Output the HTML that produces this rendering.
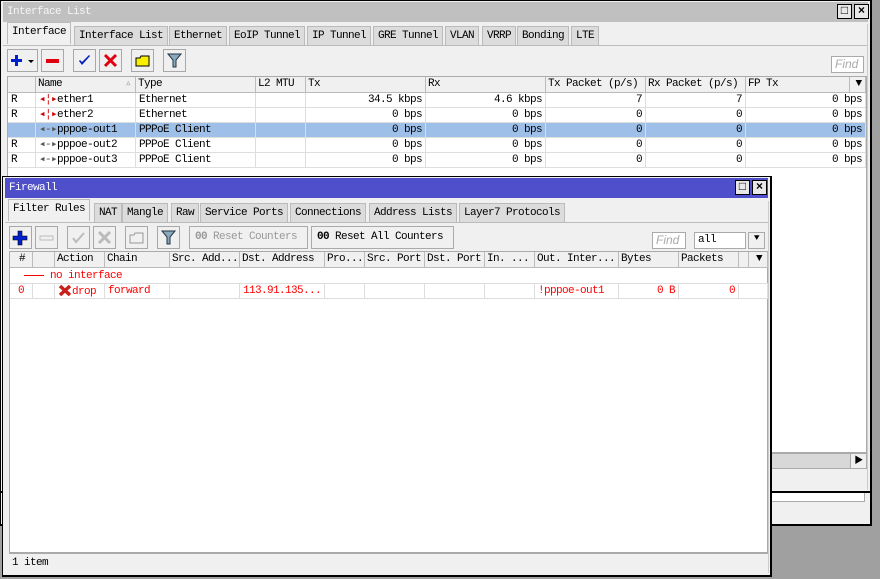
<!DOCTYPE html>
<html><head><meta charset="utf-8"><style>
*{margin:0;padding:0;box-sizing:border-box}
body{width:880px;height:579px;background:#a0a0a0;position:relative;overflow:hidden;font-family:"Liberation Mono","Noto Sans CJK SC",monospace;font-size:11px;letter-spacing:-0.6px;color:#000}
.a{position:absolute}
.win{position:absolute;background:#f0f0f0;border:1px solid #000;border-right-width:2px;border-bottom-width:2px}
.tb{position:absolute;left:2px;right:2px;height:20px;line-height:20px;padding-left:4px;font-size:11px}
.tab{position:absolute;height:20px;line-height:19px;padding:0 4px;background:#dcdcdc;border:1px solid #bbb;border-bottom:none;white-space:nowrap}
.tab.on{background:#f0f0f0;height:22px;top:-2px!important}
.btn{position:absolute;width:23px;height:23px;border:1px solid #a8a8a8;background:#f0f0f0}
.hd{position:absolute;height:16px;line-height:15px;border-right:1px solid #bbb;border-bottom:1px solid #bbb;background:#f0f0f0;padding-left:2px;white-space:nowrap;overflow:hidden}
.c{position:absolute;height:15px;line-height:14px;border-right:1px solid #ddd;border-bottom:1px solid #ddd;padding:0 3px;white-space:nowrap;overflow:hidden}
.r{text-align:right}
.sel{background:#9dbfe8}
.wb{position:absolute;width:15px;height:15px;border:1px solid #000;background:#e8e8e8;font-size:12px;line-height:12px;text-align:center;font-weight:bold;letter-spacing:0}
</style></head><body>

<div class="win" style="left:0;top:0;width:872px;height:526px;"></div>
<div class="a" style="left:10px;top:493px;width:855px;height:9px;background:#fff;border:1px solid #aaa;border-top:none"></div>

<div class="win" style="left:0;top:0;width:872px;height:493px;">
 <div class="tb" style="top:1px;background:#c0c0c0;color:#f4f4f4">Interface List</div>
 <div class="wb" style="left:836px;top:3px;font-weight:normal">□</div>
 <div class="wb" style="left:853px;top:3px">×</div>
 <div class="a" style="left:0;top:23px;width:868px;height:22px">
  <div class="tab on" style="left:6px;top:0">Interface</div>
  <div class="tab" style="left:73px;top:2px">Interface List</div>
  <div class="tab" style="left:168px;top:2px">Ethernet</div>
  <div class="tab" style="left:228px;top:2px">EoIP Tunnel</div>
  <div class="tab" style="left:306px;top:2px">IP Tunnel</div>
  <div class="tab" style="left:372px;top:2px">GRE Tunnel</div>
  <div class="tab" style="left:444px;top:2px">VLAN</div>
  <div class="tab" style="left:481px;top:2px">VRRP</div>
  <div class="tab" style="left:516px;top:2px">Bonding</div>
  <div class="tab" style="left:570px;top:2px">LTE</div>
 </div>
 <div class="a" style="left:2px;top:44px;width:865px;height:1px;background:#bbb"></div>
 <div class="btn" style="left:6px;top:48px;width:31px"><svg width="29" height="21"><path d="M7 5h3v4h4v3h-4v4h-3v-4h-4v-3h4z" fill="#0020d0"/><path d="M20 10h6l-3 3z" fill="#000"/></svg></div>
 <div class="btn" style="left:40px;top:48px"><svg width="21" height="21"><rect x="4" y="9" width="13" height="4" fill="#e00010"/></svg></div>
 <div class="btn" style="left:72px;top:48px"><svg width="21" height="21"><path d="M5 11l3 4 8-9-1-1-7 7-2-2z" fill="#0020c0"/></svg></div>
 <div class="btn" style="left:98px;top:48px"><svg width="21" height="21"><path d="M5 5l11 11M16 5L5 16" stroke="#e00010" stroke-width="3"/></svg></div>
 <div class="btn" style="left:130px;top:48px"><svg width="21" height="21"><path d="M4 8h4l1-2h8v10H4z" fill="#f8f000" stroke="#000"/></svg></div>
 <div class="btn" style="left:162px;top:48px"><svg width="21" height="21"><path d="M4 4h13l-5 6v7h-3v-7z" fill="#8ab" stroke="#234"/></svg></div>
 <div class="a" style="left:830px;top:55px;width:33px;height:17px;border:1px solid #aaa;background:#fff;color:#aaa;font-family:'Liberation Sans',sans-serif;font-style:italic;font-size:12px;letter-spacing:0;line-height:15px;padding-left:3px">Find</div>
 <div class="a" style="left:6px;top:75px;width:860px;height:377px;background:#fff;border:1px solid #aaa"></div>
 <div class="a" style="left:7px;top:76px">
  <div class="hd" style="left:0;width:28px"></div>
  <div class="hd" style="left:28px;width:100px">Name<span style="position:absolute;right:4px;color:#aaa">▵</span></div>
  <div class="hd" style="left:128px;width:120px">Type</div>
  <div class="hd" style="left:248px;width:50px">L2 MTU</div>
  <div class="hd" style="left:298px;width:120px">Tx</div>
  <div class="hd" style="left:418px;width:120px">Rx</div>
  <div class="hd" style="left:538px;width:100px">Tx Packet (p/s)</div>
  <div class="hd" style="left:638px;width:100px">Rx Packet (p/s)</div>
  <div class="hd" style="left:738px;width:104px">FP Tx</div>
  <div class="hd" style="left:842px;width:16px;text-align:center">▼</div>
 </div>
 <div class="a" style="left:7px;top:92px">
  <div class="c" style="left:0;top:0;width:28px">R</div><div class="c" style="left:28px;top:0;width:100px"><span style="color:#c00">◂¦▸</span>ether1</div><div class="c" style="left:128px;top:0;width:120px">Ethernet</div><div class="c" style="left:248px;top:0;width:50px"></div><div class="c r" style="left:298px;top:0;width:120px">34.5 kbps</div><div class="c r" style="left:418px;top:0;width:120px">4.6 kbps</div><div class="c r" style="left:538px;top:0;width:100px">7</div><div class="c r" style="left:638px;top:0;width:100px">7</div><div class="c r" style="left:738px;top:0;width:120px">0 bps</div>
  <div class="c" style="left:0;top:15px;width:28px">R</div><div class="c" style="left:28px;top:15px;width:100px"><span style="color:#c00">◂¦▸</span>ether2</div><div class="c" style="left:128px;top:15px;width:120px">Ethernet</div><div class="c" style="left:248px;top:15px;width:50px"></div><div class="c r" style="left:298px;top:15px;width:120px">0 bps</div><div class="c r" style="left:418px;top:15px;width:120px">0 bps</div><div class="c r" style="left:538px;top:15px;width:100px">0</div><div class="c r" style="left:638px;top:15px;width:100px">0</div><div class="c r" style="left:738px;top:15px;width:120px">0 bps</div>
  <div class="c sel" style="left:0;top:30px;width:28px"></div><div class="c sel" style="left:28px;top:30px;width:100px"><span style="color:#555">◂-▸</span>pppoe-out1</div><div class="c sel" style="left:128px;top:30px;width:120px">PPPoE Client</div><div class="c sel" style="left:248px;top:30px;width:50px"></div><div class="c r sel" style="left:298px;top:30px;width:120px">0 bps</div><div class="c r sel" style="left:418px;top:30px;width:120px">0 bps</div><div class="c r sel" style="left:538px;top:30px;width:100px">0</div><div class="c r sel" style="left:638px;top:30px;width:100px">0</div><div class="c r sel" style="left:738px;top:30px;width:120px">0 bps</div>
  <div class="c" style="left:0;top:45px;width:28px">R</div><div class="c" style="left:28px;top:45px;width:100px"><span style="color:#555">◂-▸</span>pppoe-out2</div><div class="c" style="left:128px;top:45px;width:120px">PPPoE Client</div><div class="c" style="left:248px;top:45px;width:50px"></div><div class="c r" style="left:298px;top:45px;width:120px">0 bps</div><div class="c r" style="left:418px;top:45px;width:120px">0 bps</div><div class="c r" style="left:538px;top:45px;width:100px">0</div><div class="c r" style="left:638px;top:45px;width:100px">0</div><div class="c r" style="left:738px;top:45px;width:120px">0 bps</div>
  <div class="c" style="left:0;top:60px;width:28px">R</div><div class="c" style="left:28px;top:60px;width:100px"><span style="color:#555">◂-▸</span>pppoe-out3</div><div class="c" style="left:128px;top:60px;width:120px">PPPoE Client</div><div class="c" style="left:248px;top:60px;width:50px"></div><div class="c r" style="left:298px;top:60px;width:120px">0 bps</div><div class="c r" style="left:418px;top:60px;width:120px">0 bps</div><div class="c r" style="left:538px;top:60px;width:100px">0</div><div class="c r" style="left:638px;top:60px;width:100px">0</div><div class="c r" style="left:738px;top:60px;width:120px">0 bps</div>
 </div>
 <div class="a" style="left:6px;top:452px;width:860px;height:16px;background:#d8d8d8;border:1px solid #aaa"></div>
 <div class="a" style="left:849px;top:452px;width:17px;height:16px;background:#f0f0f0;border:1px solid #aaa;font-size:9px;line-height:14px;text-align:center">▶</div>
 <div class="a" style="left:866px;top:23px;width:1px;height:466px;background:#ccc"></div>
</div>

<div class="win" style="left:2px;top:176px;width:770px;height:401px;">
 <div class="tb" style="top:1px;background:#4f4fcc;color:#fff">Firewall</div>
 <div class="wb" style="left:732px;top:3px;font-weight:normal">□</div>
 <div class="wb" style="left:749px;top:3px">×</div>
 <div class="a" style="left:0;top:24px;width:766px;height:22px">
  <div class="tab on" style="left:5px;top:0">Filter Rules</div>
  <div class="tab" style="left:91px;top:2px">NAT</div>
  <div class="tab" style="left:119px;top:2px">Mangle</div>
  <div class="tab" style="left:168px;top:2px">Raw</div>
  <div class="tab" style="left:197px;top:2px">Service Ports</div>
  <div class="tab" style="left:287px;top:2px">Connections</div>
  <div class="tab" style="left:366px;top:2px">Address Lists</div>
  <div class="tab" style="left:456px;top:2px">Layer7 Protocols</div>
 </div>
 <div class="a" style="left:2px;top:45px;width:764px;height:1px;background:#bbb"></div>
 <div class="btn" style="left:6px;top:49px"><svg width="21" height="21"><path d="M8 4h4v5h5v4h-5v5h-4v-5h-5v-4h5z" fill="#0020d0" stroke="#000" stroke-width=".6"/></svg></div>
 <div class="btn" style="left:32px;top:49px"><svg width="21" height="21"><rect x="4" y="9" width="13" height="4" fill="none" stroke="#bbb"/></svg></div>
 <div class="btn" style="left:64px;top:49px"><svg width="21" height="21"><path d="M5 11l3 4 8-9" fill="none" stroke="#bbb" stroke-width="2"/></svg></div>
 <div class="btn" style="left:90px;top:49px"><svg width="21" height="21"><path d="M5 5l11 11M16 5L5 16" stroke="#bbb" stroke-width="3"/></svg></div>
 <div class="btn" style="left:122px;top:49px"><svg width="21" height="21"><path d="M4 8h4l1-2h8v10H4z" fill="none" stroke="#999"/></svg></div>
 <div class="btn" style="left:154px;top:49px"><svg width="21" height="21"><path d="M4 4h13l-5 6v7h-3v-7z" fill="#8ab" stroke="#234"/></svg></div>
 <div class="a" style="left:186px;top:49px;width:119px;height:23px;border:1px solid #aaa;line-height:21px;padding-left:5px;color:#999;white-space:nowrap"><b>00</b> Reset Counters</div>
 <div class="a" style="left:308px;top:49px;width:143px;height:23px;border:1px solid #aaa;line-height:21px;padding-left:5px;white-space:nowrap"><b>00</b> Reset All Counters</div>
 <div class="a" style="left:649px;top:55px;width:34px;height:17px;border:1px solid #aaa;background:#fff;color:#aaa;font-family:'Liberation Sans',sans-serif;font-style:italic;font-size:12px;letter-spacing:0;line-height:15px;padding-left:3px">Find</div>
 <div class="a" style="left:691px;top:55px;width:52px;height:17px;border:1px solid #aaa;background:#fff;line-height:15px;padding-left:3px">all</div>
 <div class="a" style="left:745px;top:55px;width:17px;height:17px;border:1px solid #aaa;background:#f0f0f0;text-align:center;line-height:14px;font-size:10px">⯆</div>
 <div class="a" style="left:6px;top:74px;width:759px;height:302px;background:#fff;border:1px solid #aaa"></div>
 <div class="a" style="left:7px;top:75px">
  <div class="hd" style="left:0;width:23px;text-align:center">#</div>
  <div class="hd" style="left:23px;width:22px"></div>
  <div class="hd" style="left:45px;width:50px">Action</div>
  <div class="hd" style="left:95px;width:65px">Chain</div>
  <div class="hd" style="left:160px;width:70px">Src. Add...</div>
  <div class="hd" style="left:230px;width:85px">Dst. Address</div>
  <div class="hd" style="left:315px;width:40px">Pro...</div>
  <div class="hd" style="left:355px;width:60px">Src. Port</div>
  <div class="hd" style="left:415px;width:60px">Dst. Port</div>
  <div class="hd" style="left:475px;width:50px">In. ...</div>
  <div class="hd" style="left:525px;width:84px">Out. Inter...</div>
  <div class="hd" style="left:609px;width:60px">Bytes</div>
  <div class="hd" style="left:669px;width:60px">Packets</div>
  <div class="hd" style="left:729px;width:10px"></div>
  <div class="hd" style="left:739px;width:19px;text-align:center">▼</div>
 </div>
 <div class="a" style="left:7px;top:92px;color:#f00">
  <div class="c" style="left:0;top:0;width:758px;border-right:none;padding-left:14px"><span style="display:inline-block;width:20px;height:1px;background:#f00;vertical-align:middle"></span> no interface</div>
  <div class="c" style="left:0;top:15px;width:23px;text-align:center">0</div>
  <div class="c" style="left:23px;top:15px;width:22px"></div>
  <div class="c" style="left:45px;top:15px;width:50px"><svg width="14" height="12" style="vertical-align:-2px"><path d="M2 2l10 9M12 2L2 11" stroke="#c8201c" stroke-width="3.5"/></svg>drop</div>
  <div class="c" style="left:95px;top:15px;width:65px">forward</div>
  <div class="c" style="left:160px;top:15px;width:70px"></div>
  <div class="c" style="left:230px;top:15px;width:85px">113.91.135...</div>
  <div class="c" style="left:315px;top:15px;width:40px"></div>
  <div class="c" style="left:355px;top:15px;width:60px"></div>
  <div class="c" style="left:415px;top:15px;width:60px"></div>
  <div class="c" style="left:475px;top:15px;width:50px"></div>
  <div class="c" style="left:525px;top:15px;width:84px">!pppoe-out1</div>
  <div class="c r" style="left:609px;top:15px;width:60px">0 B</div>
  <div class="c r" style="left:669px;top:15px;width:60px">0</div>
  <div class="c" style="left:729px;top:15px;width:29px"></div>
 </div>
 <div class="a" style="left:6px;top:376px;width:759px;height:19px;line-height:18px;padding-left:3px;border-top:1px solid #aaa">1 item</div>
 <div class="a" style="left:765px;top:24px;width:1px;height:372px;background:#ccc"></div>
</div>
</body></html>
